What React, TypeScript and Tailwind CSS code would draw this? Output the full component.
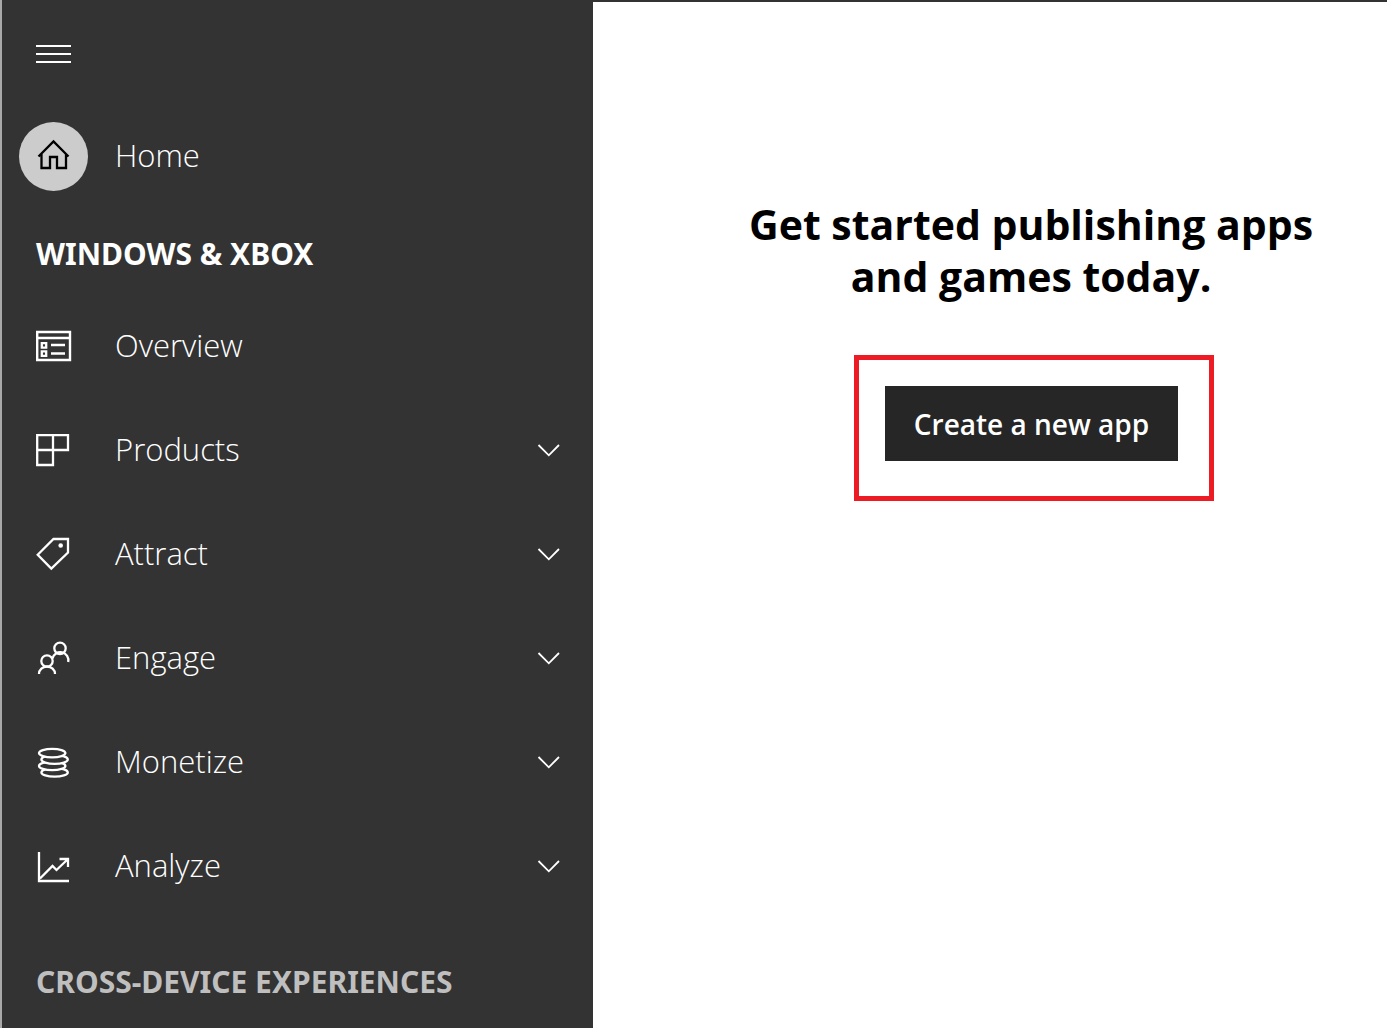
import type { ReactNode } from "react";

function Icon({ children }: { children: ReactNode }) {
  return (
    <svg
      viewBox="0 0 36 36"
      className="size-9 shrink-0"
      fill="none"
      stroke="currentColor"
      strokeWidth="2.3"
      aria-hidden="true"
    >
      {children}
    </svg>
  );
}

const HomeIcon = () => (
  <Icon>
    <path d="M2.5 18.5 17.5 3.5 32.5 18.5M5.5 16V30H14V19H21V30H30V16" />
  </Icon>
);

const OverviewIcon = () => (
  <Icon>
    <path d="M1.2 4H34V32H1.2ZM1 10H34" strokeWidth="2.4" />
    <path d="M5.8 15.2H10.2V19.6H5.8ZM5.8 23.4H10.2V27.8H5.8ZM15 17H29M15 25.5H29" />
  </Icon>
);

const ProductsIcon = () => (
  <Icon>
    <path d="M1.2 3.2H32V18H1.2ZM1.2 18V33H17V3" />
  </Icon>
);

const AttractIcon = () => (
  <Icon>
    <path d="M1.7 18.8 17.5 3H32V16.6L15.3 32.6Z" />
    <circle cx="24.7" cy="9.5" r="2.3" fill="currentColor" stroke="none" />
  </Icon>
);

const EngageIcon = () => (
  <Icon>
    <circle cx="24" cy="8.3" r="5.7" />
    <circle cx="11" cy="21" r="5.7" />
    <path d="M3 34A8 7.5 0 0 1 19 34M16.5 18.5A8 8 0 0 1 32.2 21.9" />
  </Icon>
);

const MonetizeIcon = () => (
  <Icon>
    <g className="fill-[#333333]">
      <ellipse cx="18.6" cy="28.4" rx="13.2" ry="4.3" />
      <ellipse cx="16.2" cy="21.9" rx="13.2" ry="4.3" />
      <ellipse cx="18.6" cy="15.5" rx="13.2" ry="4.3" />
      <ellipse cx="16.2" cy="9.1" rx="13.2" ry="4.3" />
    </g>
  </Icon>
);

const AnalyzeIcon = () => (
  <Icon>
    <path d="M3 4V33H33M4 30.5 16.5 18 20.5 22 32 11M23.5 11H32V19" />
  </Icon>
);

const items = [
  { label: "Overview", icon: OverviewIcon, expandable: false },
  { label: "Products", icon: ProductsIcon, expandable: true },
  { label: "Attract", icon: AttractIcon, expandable: true },
  { label: "Engage", icon: EngageIcon, expandable: true },
  { label: "Monetize", icon: MonetizeIcon, expandable: true },
  { label: "Analyze", icon: AnalyzeIcon, expandable: true },
];

export default function App() {
  return (
    <div className="flex min-h-screen bg-white font-['Open_Sans','Noto_Sans',sans-serif]">
      <aside className="w-[593px] shrink-0 border-l-2 border-[#a9a9a9] bg-[#333333] text-white">
        <div className="flex h-[104px] items-center pt-1 pl-[34px]">
          <button type="button" aria-label="Toggle navigation">
            <svg viewBox="0 0 36 36" className="size-9" stroke="currentColor" strokeWidth="2" aria-hidden="true">
              <path d="M0 10H35M0 18H35M0 26H35" />
            </svg>
          </button>
        </div>

        <nav aria-label="Main">
          <a href="#home" className="flex h-[104px] items-center gap-[27px] pl-[17px]">
            <span className="flex size-[69px] items-center justify-center rounded-full bg-[#cccccc] text-black">
              <HomeIcon />
            </span>
            <span className="pb-0.5 text-[31px] leading-10 font-light">Home</span>
          </a>

          <h2 className="flex h-[86px] items-center pt-1 pl-[34px] font-['Noto_Sans',sans-serif] text-[30px] font-bold">
            WINDOWS &amp; XBOX
          </h2>

          <ul>
            {items.map(({ label, icon: ItemIcon, expandable }) => {
              const content = (
                <>
                  <ItemIcon />
                  <span className="flex-1 pb-0.5 text-left text-[31px] leading-10 font-light">{label}</span>
                </>
              );
              const row = "flex h-[104px] w-full items-center gap-[43px] pr-8 pl-[34px]";
              return (
                <li key={label}>
                  {expandable ? (
                    <button type="button" aria-expanded="false" className={row}>
                      {content}
                      <svg
                        viewBox="0 0 24 24"
                        className="size-6"
                        fill="none"
                        stroke="currentColor"
                        strokeWidth="1.8"
                        aria-hidden="true"
                      >
                        <path d="M1.5 7 11.8 17.3 22 7" />
                      </svg>
                    </button>
                  ) : (
                    <a href="#overview" className={row}>
                      {content}
                    </a>
                  )}
                </li>
              );
            })}
          </ul>

          <h2 className="flex h-[110px] items-center pt-4 pl-[34px] font-['Noto_Sans',sans-serif] text-[30px] font-bold text-[#bfbfbf]">
            CROSS-DEVICE EXPERIENCES
          </h2>
        </nav>
      </aside>

      <main className="flex flex-1 flex-col items-center border-t-2 border-[#333333] pt-[196px] pl-[82px]">
        <h1 className="text-center text-[41px] leading-[52px] font-bold text-black">
          Get started publishing apps
          <br />
          and games today.
        </h1>
        <div className="mt-[53px] ml-1.5 border-5 border-[#ed1c24] pt-[26px] pr-[31px] pb-[35px] pl-[26px]">
          <button type="button" className="h-[75px] bg-[#262626] px-[29px] text-[28px] font-semibold text-white">
            Create a new app
          </button>
        </div>
      </main>
    </div>
  );
}
